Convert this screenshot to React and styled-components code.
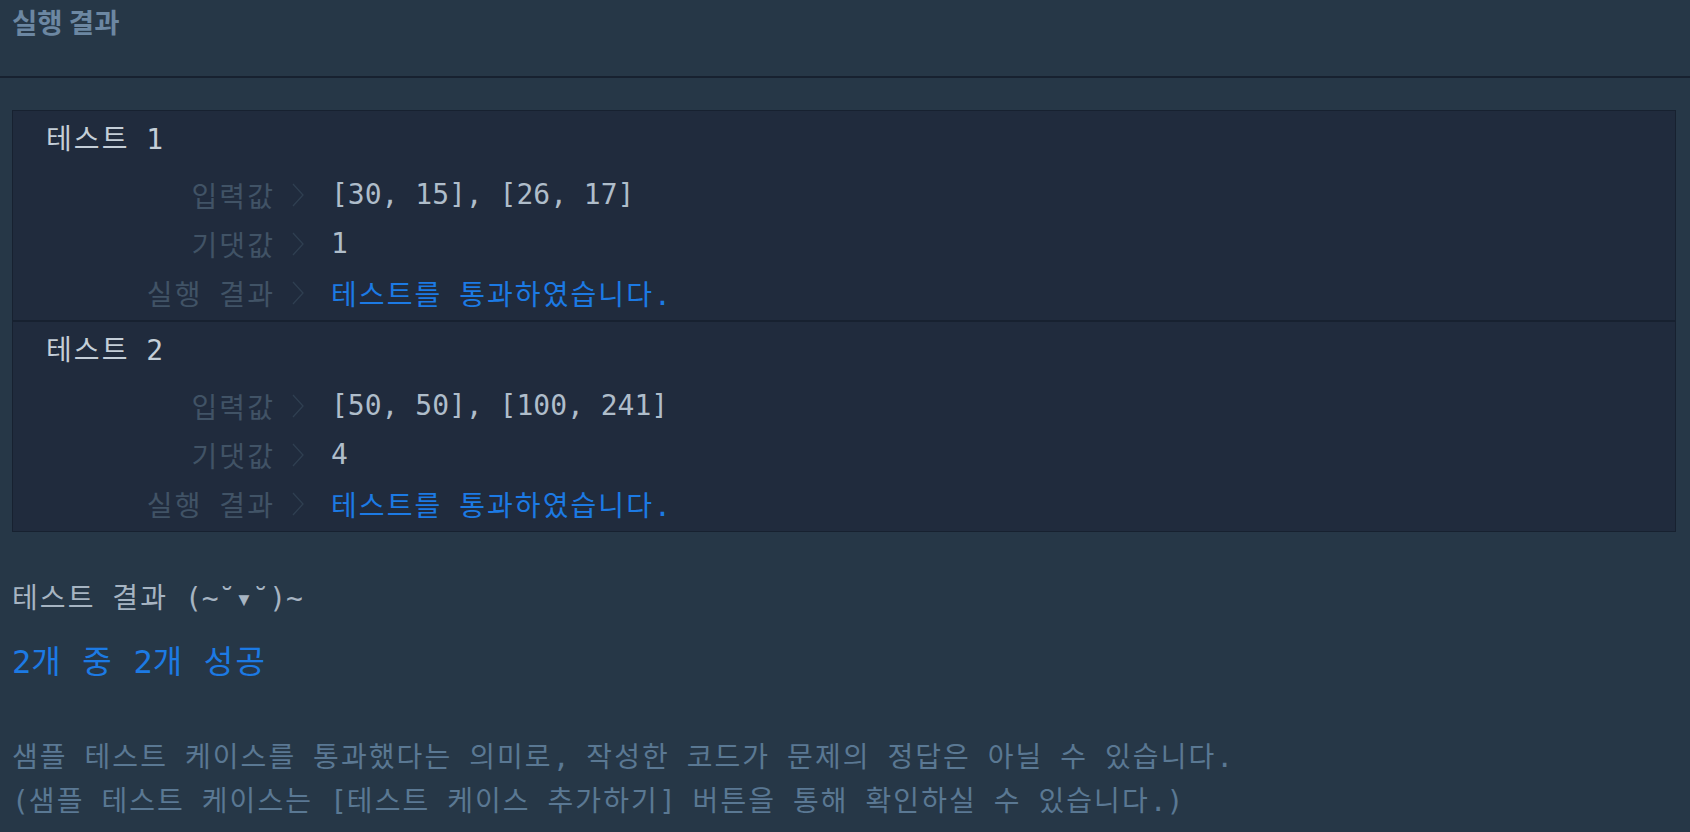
import React from 'react';
import styled, {createGlobalStyle} from 'styled-components';

const MONO = `"DejaVu Sans Mono", "Noto Sans CJK KR", monospace`;
const HANGUL_RUN = /([\u1100-\u11FF\u3130-\u318F\uAC00-\uD7AF]+)/;

const GlobalStyle = createGlobalStyle`
  html, body {
    margin: 0;
    padding: 0;
    background: #263747;
  }
`;

const tests = [
  {id: 1, input: '[30, 15], [26, 17]', expected: '1', result: '테스트를 통과하였습니다.'},
  {id: 2, input: '[50, 50], [100, 241]', expected: '4', result: '테스트를 통과하였습니다.'},
];

// the fallback hangul face is narrower than a coding font, so pad hangul runs to a full cell
const Mono = ({text}) =>
  text.split(HANGUL_RUN).map((part, i) => (i % 2 === 1 ? <StHangul key={i}>{part}</StHangul> : part));

const Chevron = () => (
  <StChevron>
    <svg width="12" height="24" viewBox="0 0 12 24" fill="none">
      <polyline points="1,1 11,12 1,23" stroke="#2f3f51" strokeWidth="1.3" />
    </svg>
  </StChevron>
);

const App = () => {
  return (
    <StPage>
      <GlobalStyle />
      <StHeader>
        <StTitle>실행 결과</StTitle>
      </StHeader>
      <StBody>
        <StResultBox>
          {tests.map(test => (
            <StTestCase key={test.id}>
              <StCaseTitle>
                <Mono text={`테스트 ${test.id}`} />
              </StCaseTitle>
              <StRows>
                <StRow>
                  <StLabel>
                    <Mono text="입력값" />
                  </StLabel>
                  <Chevron />
                  <StValue>{test.input}</StValue>
                </StRow>
                <StRow>
                  <StLabel>
                    <Mono text="기댓값" />
                  </StLabel>
                  <Chevron />
                  <StValue>{test.expected}</StValue>
                </StRow>
                <StRow>
                  <StLabel>
                    <Mono text="실행 결과" />
                  </StLabel>
                  <Chevron />
                  <StValue $pass>
                    <Mono text={test.result} />
                  </StValue>
                </StRow>
              </StRows>
            </StTestCase>
          ))}
        </StResultBox>
        <StSummary>
          <StSummaryHead>
            <Mono text="테스트 결과 (~˘▾˘)~" />
          </StSummaryHead>
          <StScore>
            <Mono text="2개 중 2개 성공" />
          </StScore>
          <StNotice>
            <p>
              <Mono text="샘플 테스트 케이스를 통과했다는 의미로, 작성한 코드가 문제의 정답은 아닐 수 있습니다." />
            </p>
            <p>
              <Mono text="(샘플 테스트 케이스는 [테스트 케이스 추가하기] 버튼을 통해 확인하실 수 있습니다.)" />
            </p>
          </StNotice>
        </StSummary>
      </StBody>
    </StPage>
  );
};

export default App;

const StPage = styled.div`
  width: 100%;
  min-height: 832px;
  background: #263747;
  font-family: ${MONO};
`;

const StHangul = styled.span`
  letter-spacing: 0.074em;
`;

const StHeader = styled.header`
  height: 76px;
  padding: 0 12px;
  border-bottom: 2px solid #172130;
`;

const StTitle = styled.h2`
  margin: 0;
  font-family: "Noto Sans CJK KR", sans-serif;
  font-size: 27.5px;
  font-weight: 700;
  line-height: 42px;
  color: #6c87a2;
`;

const StBody = styled.div`
  padding: 32px 14px 0 12px;
`;

const StResultBox = styled.div`
  background: #202b3d;
  border: 1px solid #172130;
`;

const StTestCase = styled.section`
  padding: 5px 0 3px;

  & + & {
    border-top: 2px solid #172130;
  }
`;

const StCaseTitle = styled.div`
  padding-left: 33px;
  font-size: 28px;
  line-height: 48px;
  color: #c4ced8;
`;

const StRows = styled.div`
  margin-top: 6px;
`;

const StRow = styled.div`
  display: flex;
  align-items: center;
  height: 49px;
  font-size: 28px;
`;

const StLabel = styled.span`
  width: 262px;
  text-align: right;
  color: #415366;
`;

const StChevron = styled.span`
  display: flex;
  justify-content: center;
  align-items: center;
  width: 56px;
  padding-right: 10px;
  box-sizing: border-box;
`;

const StValue = styled.span`
  color: ${({$pass}) => ($pass ? '#1c7ae4' : '#afbdca')};
`;

const StSummary = styled.div`
  margin-top: 45px;
`;

const StSummaryHead = styled.div`
  font-size: 28px;
  line-height: 44px;
  color: #a6b4c2;
`;

const StScore = styled.div`
  margin-top: 17px;
  font-size: 32px;
  line-height: 48px;
  color: #1c7ae4;
`;

const StNotice = styled.div`
  margin-top: 50px;
  font-size: 28px;
  color: #5a7893;

  & p {
    margin: 0;
    line-height: 44px;
    white-space: nowrap;
  }
`;
